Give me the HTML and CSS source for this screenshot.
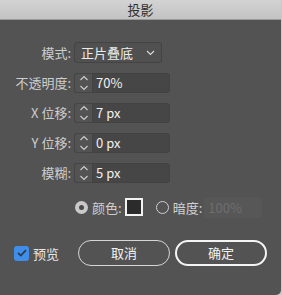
FILE: index.html
```html
<!DOCTYPE html>
<html>
<head>
<meta charset="utf-8">
<link rel="stylesheet" href="styles.css">
</head>
<body>
<div class="win">
  <div class="title">投影</div>
  <div class="content">
    <div class="form">
      <div class="lbl">模式:</div>
      <div class="select"><span>正片叠底</span>
        <svg class="chev" width="9" height="6" viewBox="0 0 9 6"><path d="M1 1 L4.5 4.5 L8 1" fill="none" stroke="#d8d8d8" stroke-width="1.2"/></svg>
      </div>

      <div class="lbl">不透明度:</div>
      <div class="field"><div class="spin"><svg width="10" height="16" viewBox="0 0 10 16"><path d="M1.5 5 L5 1.5 L8.5 5 M1.5 11 L5 14.5 L8.5 11" fill="none" stroke="#cfcfcf" stroke-width="1.1"/></svg></div><div class="inp">70%</div></div>

      <div class="lbl">X 位移:</div>
      <div class="field"><div class="spin"><svg width="10" height="16" viewBox="0 0 10 16"><path d="M1.5 5 L5 1.5 L8.5 5 M1.5 11 L5 14.5 L8.5 11" fill="none" stroke="#cfcfcf" stroke-width="1.1"/></svg></div><div class="inp">7 px</div></div>

      <div class="lbl">Y 位移:</div>
      <div class="field"><div class="spin"><svg width="10" height="16" viewBox="0 0 10 16"><path d="M1.5 5 L5 1.5 L8.5 5 M1.5 11 L5 14.5 L8.5 11" fill="none" stroke="#cfcfcf" stroke-width="1.1"/></svg></div><div class="inp">0 px</div></div>

      <div class="lbl">模糊:</div>
      <div class="field"><div class="spin"><svg width="10" height="16" viewBox="0 0 10 16"><path d="M1.5 5 L5 1.5 L8.5 5 M1.5 11 L5 14.5 L8.5 11" fill="none" stroke="#cfcfcf" stroke-width="1.1"/></svg></div><div class="inp">5 px</div></div>

      <div class="colorrow">
        <span class="radio on"></span><span class="rl">颜色:</span><span class="swatch"></span>
        <span class="radio off"></span><span class="rl">暗度:</span><span class="dis">100%</span>
      </div>
    </div>
    <div class="bottom">
      <label class="check"><span class="box"><svg width="10" height="8" viewBox="0 0 10 8"><path d="M1 4 L3.8 6.6 L9 1.2" fill="none" stroke="#2b3a4f" stroke-width="1.8"/></svg></span>预览</label>
      <div class="btn">取消</div>
      <div class="btn primary">确定</div>
    </div>
  </div>
</div>
</body>
</html>
```

FILE: styles.css
```css
* { box-sizing: border-box; }
html, body { margin: 0; padding: 0; }
body {
  width: 282px; height: 295px;
  background: #c9c9c9;
  font-family: "Noto Sans CJK SC", "Liberation Sans", sans-serif;
  font-size: 13px;
  overflow: hidden;
}
.win {
  width: 281px; height: 295px;
  background: #535353;
  border-bottom-right-radius: 5px;
  display: flex; flex-direction: column;
}
.title {
  height: 20px;
  background: linear-gradient(#d3d3d3, #c3c3c3);
  border-bottom: 1px solid #9a9a9a;
  color: #2e2e2e;
  text-align: center;
  line-height: 19px;
  font-size: 13px;
}
.content { padding-top: 22px; flex: 1; display: flex; flex-direction: column; }
.form {
  display: grid;
  grid-template-columns: 71px auto;
  column-gap: 3px;
  row-gap: 10px;
  align-items: center;
}
.lbl { text-align: right; color: #cdcdcd; line-height: 20px; }
.select {
  width: 88px; height: 21px;
  border: 1px solid #434343;
  border-radius: 3px;
  background: #505050;
  display: flex; align-items: center; justify-content: space-between;
  padding: 0 6px 0 6px;
  color: #ececec;
}
.chev { margin-top: 1px; }
.field { display: flex; height: 20px; }
.spin {
  width: 18px; height: 20px;
  border: 1px solid #454545;
  border-right: none;
  border-radius: 3px 0 0 3px;
  display: flex; align-items: center; justify-content: center;
}
.inp {
  width: 78px; height: 20px;
  background: #464646;
  border: 1px solid #424242;
  border-radius: 0 3px 3px 0;
  color: #f0f0f0;
  padding-left: 3px;
  line-height: 18px;
}
.colorrow {
  grid-column: 2;
  display: flex; align-items: center;
  height: 22px;
  margin-top: 3px;
  color: #d0d0d0;
}
.radio {
  width: 13px; height: 13px; border-radius: 50%;
  display: inline-block; margin-left: 1px;
}
.radio.on { background: #c9c9c9; position: relative; }
.radio.on::after {
  content: ""; position: absolute; left: 4px; top: 4px;
  width: 5px; height: 5px; border-radius: 50%; background: #4a4a4a;
}
.radio.off { border: 1px solid #cfcfcf; margin-left: 13px; }
.rl { margin-left: 4px; }
.swatch {
  width: 18px; height: 18px;
  border: 2px solid #f2f2f2;
  background: #2b2b2b;
  margin-left: 3px;
}
.dis {
  margin-left: 2px;
  width: 58px; height: 21px;
  background: #575757;
  border-radius: 3px;
  color: #6e6e6e;
  padding-left: 4px;
  line-height: 21px;
}
.bottom {
  display: flex; align-items: center;
  margin-top: 22px;
  padding-left: 14px;
}
.check { display: flex; align-items: center; color: #e6e6e6; width: 64px; }
.box {
  width: 15px; height: 15px; border-radius: 3px;
  background: #3f8fea;
  display: flex; align-items: center; justify-content: center;
  margin-right: 4px;
}
.btn {
  width: 92px; height: 26px;
  border: 1px solid #d6d6d6;
  border-radius: 13px;
  color: #f2f2f2;
  text-align: center;
  line-height: 24px;
}
.btn.primary {
  margin-left: 5px;
  border: 2px solid #f4f4f4;
  line-height: 22px;
}
```
